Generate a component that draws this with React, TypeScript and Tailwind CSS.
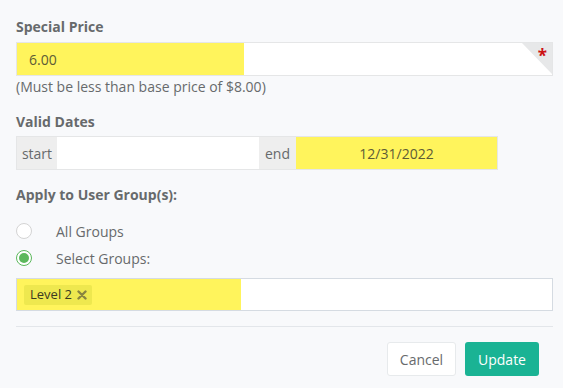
import React from 'react';

const hl = 'bg-[#fff45c]';

function Radio({ checked, label }: { checked?: boolean; label: string }) {
  return (
    <label className="flex items-center h-[27px]">
      <span
        className={`w-4 h-4 rounded-full border flex items-center justify-center bg-white ${
          checked ? 'border-[#5cb85c]' : 'border-[#d4d4d4]'
        }`}
      >
        {checked && <span className="w-[10px] h-[10px] rounded-full bg-[#5cb85c]" />}
      </span>
      <span className="ml-6 mt-[2px] text-[14px] leading-[20px]">{label}</span>
    </label>
  );
}

export default function App() {
  return (
    <div
      className="w-[563px] h-[388px] bg-[#f8f9fb] text-[#676a6c] pl-4 pr-[10px] pt-[17px] overflow-hidden"
      style={{ fontFamily: '"Open Sans", "Liberation Sans", sans-serif' }}
    >
      {/* special price */}
      <div className="text-[14px] leading-[20px] font-bold">Special Price</div>
      <div className="relative mt-[5px] h-[34px] border border-[#e5e6e7] bg-white flex">
        <div className={`${hl} w-[227px] h-full flex items-center pl-3 text-[14px] text-[#5d5b36]`}>6.00</div>
        <div className="absolute right-0 top-0 w-[30px] h-[31px] bg-[#e7e8e9] [clip-path:polygon(0_0,100%_0,100%_100%)]" />
        <span className="absolute right-[5px] top-[3px] text-[17px] leading-[20px] font-bold text-[#cc1111]">*</span>
      </div>
      <div className="mt-[1px] text-[14px] leading-[20px]">(Must be less than base price of $8.00)</div>

      {/* valid dates */}
      <div className="mt-[15px] text-[14px] leading-[20px] font-bold">Valid Dates</div>
      <div className="mt-[4px] w-[482px] h-[34px] border border-[#e5e6e7] flex text-[14px]">
        <div className="w-[40px] bg-[#eeeeee] flex items-center justify-center">start</div>
        <div className="w-[202px] bg-white" />
        <div className="w-[37px] bg-[#eeeeee] flex items-center justify-center">end</div>
        <div className={`flex-1 ${hl} flex items-center justify-center text-[#5d5b36]`}>12/31/2022</div>
      </div>

      {/* groups */}
      <div className="mt-[15px] text-[14px] leading-[20px] font-bold">Apply to User Group(s):</div>
      <div className="mt-[12px] flex flex-col">
        <Radio label="All Groups" />
        <Radio checked label="Select Groups:" />
      </div>
      <div className="mt-[7px] h-[33px] border border-[#d5dbe2] bg-white flex">
        <div className={`${hl} w-[224px] h-full flex items-center pl-[7px]`}>
          <span className="h-[20px] pl-[6px] pr-[5px] rounded-[2px] bg-[#eee84f] flex items-center gap-[5px] text-[13px] text-[#3b3a22]">
            Level 2
            <svg width="10" height="10" viewBox="0 0 10 10" className="text-[#8a8540]">
              <path d="M1.5 1.5L8.5 8.5M8.5 1.5L1.5 8.5" stroke="currentColor" strokeWidth="2.4" strokeLinecap="round" />
            </svg>
          </span>
        </div>
      </div>

      <div className="mt-[15px] h-px bg-[#e3e6ea]" />

      <div className="mt-[15px] flex justify-end gap-[9px] pr-[14px]">
        <button className="w-[69px] h-[34px] rounded-[3px] border border-[#e7eaec] bg-white text-[14px] text-[#676a6c]">
          Cancel
        </button>
        <button className="w-[74px] h-[34px] rounded-[3px] bg-[#1ab394] text-[14px] text-white">Update</button>
      </div>
    </div>
  );
}
